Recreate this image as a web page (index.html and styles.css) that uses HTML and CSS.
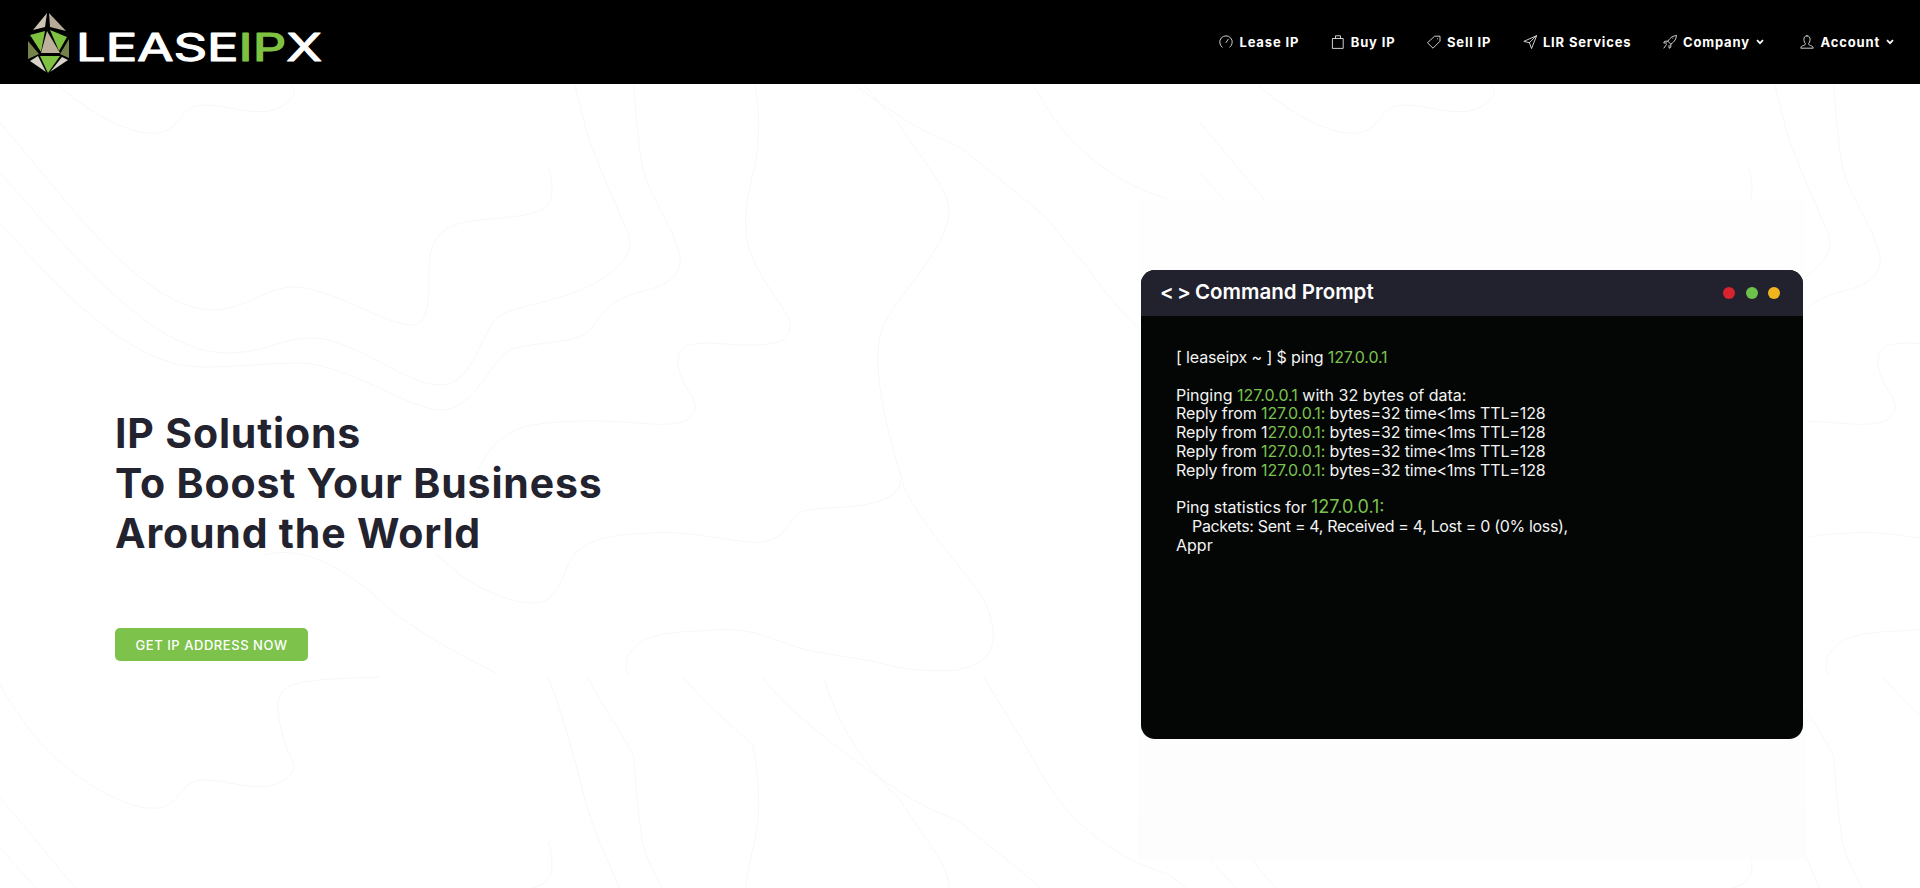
FILE: index.html
```html
<!DOCTYPE html>
<html lang="en">
<head>
<meta charset="utf-8">
<title>LeaseIPX</title>
<link rel="stylesheet" href="styles.css">
</head>
<body>
<header class="topbar">
  <a class="logo" href="#">
    <svg class="gem" viewBox="27 12 44 62" width="44" height="62">
      <polygon fill="#cbc3b4" points="47,13 33,30 45,27"/>
      <polygon fill="#b5ab98" points="49,13 66,31 50,27"/>
      <polygon fill="#7fc241" points="30,35 45,31 41,52"/>
      <polygon fill="#bdb19c" points="47,31 60,53 41,53"/>
      <polygon fill="#7fc241" points="50,30 67,37 59,51"/>
      <polygon fill="#75834a" points="69,39 69,58 60,54"/>
      <polygon fill="#75834a" points="28,41 39,54 28,59"/>
      <polygon fill="#7fc241" points="40,56 60,56 48,73"/>
      <polygon fill="#d8d4ca" points="30,61 38,56 46,72"/>
      <polygon fill="#d8d4ca" points="62,57 68,60 50,72"/>
    </svg>
    <svg class="wordmark" viewBox="0 0 250 48" width="250" height="48">
      <text class="wordmark-text" x="1" y="38" textLength="246" lengthAdjust="spacingAndGlyphs">LEASE<tspan class="wordmark-ip">IP</tspan>X</text>
    </svg>
  </a>
  <nav class="nav">
    <a class="nav-item" href="#">
      <svg class="nav-icon" viewBox="0 0 14 14"><path d="M3.2 12.2A6.3 6.3 0 1 1 10.8 12.2M7 7.5 9.3 4.2"/></svg>
      Lease IP
    </a>
    <a class="nav-item" href="#">
      <svg class="nav-icon" viewBox="0 0 14 14"><path d="M1.8 3.5H12.2V13.4H1.8ZM4.5 3.5V.8H9.5V3.5"/></svg>
      Buy IP
    </a>
    <a class="nav-item" href="#">
      <svg class="nav-icon" viewBox="0 0 14 14"><path d="M8 1.2H13V6.2L6 13.2 .8 8ZM10.4 3.8h.1"/></svg>
      Sell IP
    </a>
    <a class="nav-item" href="#">
      <svg class="nav-icon" viewBox="0 0 14 14"><path d="M13.3 .8.8 6.4 6.4 7.7 8.4 13.2ZM6.4 7.7 13.3 .8"/></svg>
      LIR Services
    </a>
    <a class="nav-item" href="#">
      <svg class="nav-icon" viewBox="0 0 14 14"><path d="M13.3 .7C10 .7 7.6 2.3 4.8 6.2L7.8 9.2C11.7 6.4 13.3 4 13.3 .7ZM4.8 6.2H1.8L.7 8H3.6M7.8 9.2V12.2L6 13.3V10.4M3.4 9.6 1 13M9.8 3.2h.1"/></svg>
      Company
      <svg class="chevron" viewBox="0 0 8 6"><path d="M1 1.2 4 4.2 7 1.2"/></svg>
    </a>
    <a class="nav-item nav-item-account" href="#">
      <svg class="nav-icon" viewBox="0 0 14 14"><path d="M7 .8C4.9.8 3.9 2.4 3.9 4.3 3.9 6.4 5 8.2 5.4 8.6 5.6 9.6 4.8 10 3.5 10.5 2 11 .8 11.5.8 13.2H13.2C13.2 11.5 12 11 10.5 10.5 9.2 10 8.4 9.6 8.6 8.6 9 8.2 10.1 6.4 10.1 4.3 10.1 2.4 9.1.8 7 .8Z"/></svg>
      Account
      <svg class="chevron" viewBox="0 0 8 6"><path d="M1 1.2 4 4.2 7 1.2"/></svg>
    </a>
  </nav>
</header>

<main class="hero">
  <svg class="contours" width="1920" height="804" aria-hidden="true">
    <defs>
      <pattern id="topo" patternUnits="userSpaceOnUse" x="0" y="-84" width="1200" height="675">
        <g class="contour-lines">
          <path d="M380 2C340 4 300 3 285 14C272 24 280 50 284 65C290 85 300 92 290 100C275 115 255 113 230 108C210 104 195 103 185 112C175 125 170 135 147 133C115 130 60 95 30 55C15 35 5 20 0 8"/>
          <path d="M0 123C60 190 140 310 214 310C245 310 265 287 294 287C330 287 385 325 412 325C430 325 429 295 429 270C429 235 445 223 480 220C530 215 552 215 552 190C552 178 550 172 548 167"/>
          <path d="M0 173C70 250 150 353 227 353C265 353 280 338 312 338C355 338 405 385 440 385C475 385 480 330 500 315C525 303 570 300 600 280C630 262 634 245 626 228C610 190 590 150 582 113C575 85 560 30 548 2"/>
          <path d="M0 223C60 290 130 367 202 367C240 367 270 363 300 363C345 363 410 410 441 410C475 410 490 360 510 350C540 340 575 345 590 330C605 310 610 300 640 292C670 285 682 275 680 255C672 225 650 195 643 170C636 130 634 83 634 83C625 60 600 30 588 2"/>
          <path d="M683 2C715 40 745 60 753 72C758 100 762 130 755 165C748 195 742 215 748 245C760 285 790 310 790 325C790 345 770 345 740 345C700 342 680 340 678 360C678 385 697 395 695 410C690 428 660 425 625 422C590 420 540 420 515 430C495 440 485 455 478 470"/>
          <path d="M263 555C300 545 345 565 390 610C430 640 470 660 496 673"/>
          <path d="M900 480C902 495 880 503 857 506C825 510 800 505 792 520C785 535 770 545 747 542C715 538 680 530 649 533C605 535 580 540 568 565C560 585 555 603 533 603C515 603 490 595 460 575C450 565 442 560 435 553"/>
          <path d="M960 670C935 672 905 670 888 665C850 655 815 655 784 643C760 633 740 628 716 630C680 632 650 632 637 645C625 655 625 665 628 677"/>
          <path d="M824 3C838 50 860 85 900 125C925 165 950 190 949 213C945 255 890 300 880 335C872 380 890 440 905 490C925 530 965 570 984 600C995 625 1000 650 978 663C970 667 965 668 960 669"/>
          <path d="M762 2C790 40 860 90 905 120C930 135 945 140 960 147C1000 180 1040 210 1052 224C1070 250 1085 262 1092 274C1110 300 1130 320 1150 340"/>
          <path d="M984 2C1000 30 1020 60 1033 84C1050 115 1065 135 1082 150C1115 180 1140 190 1168 199C1180 208 1190 216 1200 223"/>
        </g>
      </pattern>
    </defs>
    <rect width="1920" height="804" fill="url(#topo)"/>
  </svg>

  <section class="hero-text">
    <h1 class="headline">IP Solutions<br>To Boost Your Business<br>Around the World</h1>
    <a class="cta" href="#">GET IP ADDRESS NOW</a>
  </section>

  <section class="terminal-panel">
    <div class="terminal">
      <div class="terminal-bar">
        <div class="terminal-title"><span class="code-mark">&lt; &gt;</span>Command Prompt</div>
        <div class="dots">
          <span class="dot dot-red"></span>
          <span class="dot dot-green"></span>
          <span class="dot dot-yellow"></span>
        </div>
      </div>
      <div class="terminal-body">
        <p class="block"><span class="tight">[ leaseipx ~ ] $ ping <span class="ip">127.0.0.1</span></span></p>
        <p class="block">Pinging <span class="ip">127.0.0.1</span> with 32 bytes of data:<br>
        <span class="tight">Reply from <span class="ip">127.0.0.1:</span> bytes=32 time&lt;1ms TTL=128</span><br>
        <span class="tight">Reply from 1<span class="ip">27.0.0.1:</span> bytes=32 time&lt;1ms TTL=128</span><br>
        <span class="tight">Reply from <span class="ip">127.0.0.1:</span> bytes=32 time&lt;1ms TTL=128</span><br>
        <span class="tight">Reply from <span class="ip">127.0.0.1:</span> bytes=32 time&lt;1ms TTL=128</span></p>
        <p class="block">Ping statistics for <span class="ip ip-large">127.0.0.1:</span><br>
        <span class="indent">Packets: Sent = 4, Received = 4, Lost = 0 (0% loss),</span><br>
        Appr</p>
      </div>
    </div>
  </section>
</main>
</body>
</html>
```

FILE: styles.css
```css
* { box-sizing: border-box; }
html, body { margin: 0; padding: 0; }
body {
  width: 1920px;
  height: 888px;
  overflow: hidden;
  background: #fff;
  font-family: Inter, "Liberation Sans", sans-serif;
  color: #23232f;
}
a { color: inherit; text-decoration: none; }

.topbar {
  height: 84px;
  background: #000;
  display: flex;
  align-items: center;
  justify-content: space-between;
  padding: 0 26px 0 27px;
}
.logo { display: flex; align-items: flex-start; gap: 4px; height: 84px; padding-top: 12px; }
.wordmark { margin-top: 11px; }
.wordmark-text {
  font-family: Inter, sans-serif;
  font-size: 38px;
  font-weight: 400;
  fill: #fff;
  stroke: #fff;
  stroke-width: 1.2;
  stroke-linejoin: round;
}
.wordmark-ip { fill: #7fc241; stroke: #7fc241; }

.nav { display: flex; align-items: center; gap: 31.5px; }
.nav-item {
  display: flex;
  align-items: center;
  gap: 6px;
  color: #fff;
  font-size: 13px;
  font-weight: 700;
  letter-spacing: .85px;
  white-space: nowrap;
}
.nav-item-account { margin-left: 5px; }
.nav-icon {
  width: 14px;
  height: 14px;
  fill: none;
  stroke: #e4e4e4;
  stroke-width: .9;
  stroke-linejoin: round;
  stroke-linecap: round;
}
.chevron {
  width: 8px;
  height: 6px;
  fill: none;
  stroke: #fff;
  stroke-width: 1.7;
}

.hero {
  position: relative;
  height: 804px;
  display: flex;
  justify-content: space-between;
  align-items: flex-start;
  padding: 116px 114px 0 115px;
}
.contours { position: absolute; left: 0; top: 0; }
.contour-lines path { fill: none; stroke: #f7f7f7; stroke-width: 1; }

.hero-text { position: relative; margin-top: 208px; }
.headline {
  margin: 0;
  font-size: 41px;
  line-height: 50px;
  font-weight: 700;
  letter-spacing: .83px;
  color: #23232f;
}
.cta {
  display: flex;
  align-items: center;
  justify-content: center;
  width: 193px;
  height: 33px;
  margin-top: 70px;
  border-radius: 5px;
  background: #7dc24b;
  color: #fff;
  font-size: 13px;
  font-weight: 500;
  letter-spacing: .55px;
}

.terminal-panel {
  position: relative;
  width: 668px;
  padding: 70px 3px 121px 3px;
  background: linear-gradient(#fefefe, #fdfdfd);
}
.terminal {
  height: 469px;
  border-radius: 14px;
  overflow: hidden;
  background: #030605;
  color: #f3f3f3;
}
.terminal-bar {
  height: 46px;
  display: flex;
  align-items: center;
  justify-content: space-between;
  padding: 0 23px 0 19px;
  background: #22222f;
}
.terminal-title { padding-bottom: 3px; font-size: 20.5px; font-weight: 600; color: #fff; white-space: nowrap; }
.code-mark { display: inline-block; width: 35px; letter-spacing: -1px; }
.dots { display: flex; gap: 10.5px; }
.dot { width: 12px; height: 12px; border-radius: 50%; }
.dot-red { background: #d9232f; }
.dot-green { background: #6cc24a; }
.dot-yellow { background: #f0b51f; }

.terminal-body {
  padding: 32px 35px 0;
  font-size: 16px;
  line-height: 18.75px;
}
.block { margin: 0 0 18.75px; }
.ip { color: #7cc24f; }
.ip-large { font-size: 18px; }
.tight { letter-spacing: -.13px; }
.indent { padding-left: 16px; letter-spacing: -.33px; }
```
